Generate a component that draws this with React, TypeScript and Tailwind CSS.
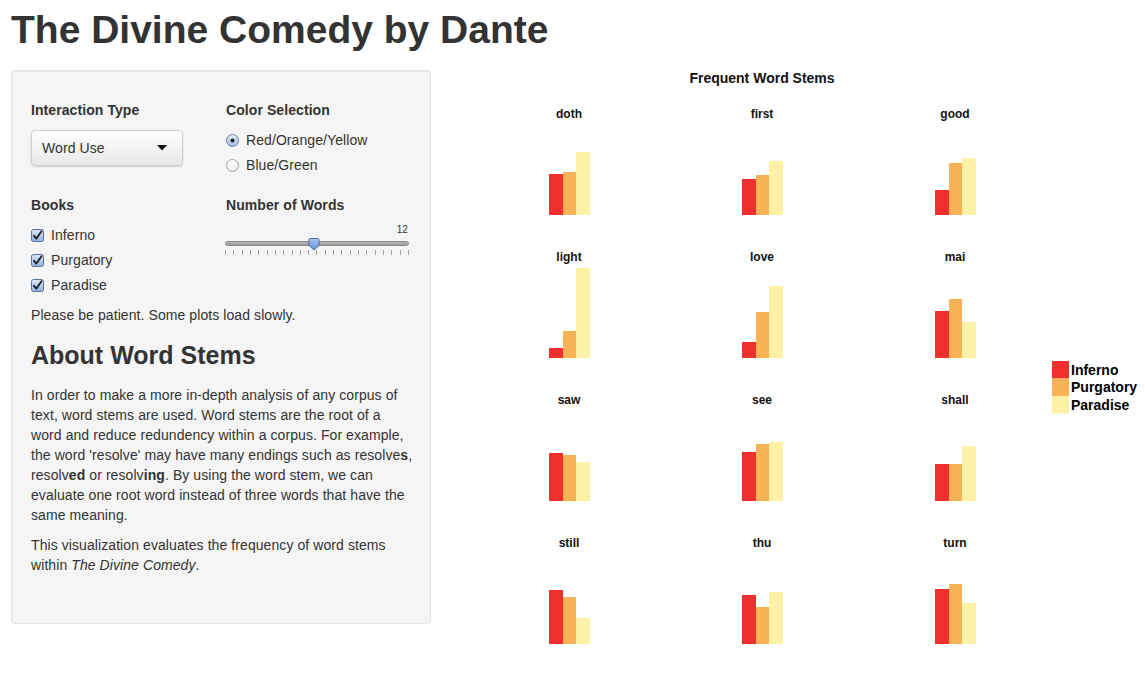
import React from "react";

const RED = "#ee312d";
const ORANGE = "#f9b357";
const YELLOW = "#fdf1a5";

type Bar = { word: string; v: [number, number, number] };

const data: Bar[] = [
  { word: "doth", v: [41, 43, 63] },
  { word: "first", v: [36, 40, 54] },
  { word: "good", v: [25, 52, 57] },
  { word: "light", v: [10, 27, 90] },
  { word: "love", v: [16, 46, 72] },
  { word: "mai", v: [47, 59, 36] },
  { word: "saw", v: [48, 46, 39] },
  { word: "see", v: [49, 57, 59] },
  { word: "shall", v: [37, 37, 55] },
  { word: "still", v: [54, 47, 26] },
  { word: "thu", v: [49, 37, 52] },
  { word: "turn", v: [55, 60, 41] },
];

function Chart() {
  const colCenters = [122, 315, 508];
  const colLeft = [102, 295, 488];
  const labelY = [47.5, 191, 334, 477];
  const bottoms = [145, 288, 431, 574];
  return (
    <svg width={698} height={600} className="block shrink-0" style={{ fontFamily: "'Liberation Sans', Arial, sans-serif" }}>
      <text x={315} y={12.5} textAnchor="middle" fontWeight="bold" fontSize="14" fill="#111">
        Frequent Word Stems
      </text>
      {data.map((d, i) => {
        const r = Math.floor(i / 3);
        const c = i % 3;
        const x = colLeft[c];
        const b = bottoms[r];
        return (
          <g key={d.word}>
            <text x={colCenters[c]} y={labelY[r]} textAnchor="middle" fontWeight="bold" fontSize="12" fill="#111">
              {d.word}
            </text>
            <rect x={x} y={b - d.v[0]} width={14} height={d.v[0]} fill={RED} />
            <rect x={x + 14} y={b - d.v[1]} width={13} height={d.v[1]} fill={ORANGE} />
            <rect x={x + 27} y={b - d.v[2]} width={14} height={d.v[2]} fill={YELLOW} />
          </g>
        );
      })}
      <rect x={605} y={291} width={17} height={17.5} fill={RED} />
      <rect x={605} y={308.5} width={17} height={17.5} fill={ORANGE} />
      <rect x={605} y={326} width={17} height={17.5} fill={YELLOW} />
      <text x={624} y={304.5} fontWeight="bold" fontSize="14" fill="#000">Inferno</text>
      <text x={624} y={322} fontWeight="bold" fontSize="14" fill="#000">Purgatory</text>
      <text x={624} y={340} fontWeight="bold" fontSize="14" fill="#000">Paradise</text>
    </svg>
  );
}

function CheckBox() {
  return (
    <svg width="13" height="13" viewBox="0 0 13 13" className="shrink-0">
      <defs>
        <linearGradient id="cbg" x1="0" y1="0" x2="0" y2="1">
          <stop offset="0" stopColor="#dde9f8" />
          <stop offset="1" stopColor="#8fb0df" />
        </linearGradient>
      </defs>
      <rect x="0.5" y="0.5" width="12" height="12" rx="2" fill="url(#cbg)" stroke="#5b6f97" />
      <path d="M3 6.8 L5.4 9.6 L10.5 2.2" fill="none" stroke="#1c1c1c" strokeWidth="1.8" strokeLinecap="round" strokeLinejoin="round" />
    </svg>
  );
}

function Radio({ checked }: { checked: boolean }) {
  return (
    <svg width="13" height="13" viewBox="0 0 13 13" className="shrink-0">
      <defs>
        <linearGradient id="rbg" x1="0" y1="0" x2="0" y2="1">
          <stop offset="0" stopColor="#e4eefa" />
          <stop offset="1" stopColor="#9dbbe4" />
        </linearGradient>
        <linearGradient id="rbw" x1="0" y1="0" x2="0" y2="1">
          <stop offset="0" stopColor="#ffffff" />
          <stop offset="1" stopColor="#ececec" />
        </linearGradient>
      </defs>
      <circle cx="6.5" cy="6.5" r="6" fill={checked ? "url(#rbg)" : "url(#rbw)"} stroke={checked ? "#6a7fa6" : "#a3a3a3"} />
      {checked && <circle cx="6.5" cy="6.5" r="2" fill="#1e1e1e" />}
    </svg>
  );
}

function Slider() {
  const ticks = Array.from({ length: 23 });
  return (
    <div className="relative w-[184px] h-[40px] ml-[-1px]">
      <div className="absolute right-[1px] top-[9px] text-[10px] leading-[12px] text-[#333]">12</div>
      <div className="absolute left-0 right-0 top-[26px] h-[5px] rounded-[3px] border border-[#8a8a8a] bg-gradient-to-b from-[#b5b5b5] to-[#9c9c9c]" />
      <svg width="12" height="13" viewBox="0 0 12 13" className="absolute left-[83px] top-[23px]">
        <defs>
          <linearGradient id="hb" x1="0" y1="0" x2="0" y2="1">
            <stop offset="0" stopColor="#a9c8f2" />
            <stop offset="1" stopColor="#5f8fd6" />
          </linearGradient>
        </defs>
        <path d="M1 2 Q1 0.5 2.5 0.5 L9.5 0.5 Q11 0.5 11 2 L11 7.5 L6 12 L1 7.5 Z" fill="url(#hb)" stroke="#4a69a8" strokeWidth="1" />
      </svg>
      <div className="absolute left-0 right-0 top-[35px] flex justify-between">
        {ticks.map((_, i) => (
          <div key={i} className="w-px h-[5px] bg-[#a0a0a0]" />
        ))}
      </div>
    </div>
  );
}

export default function App() {
  return (
    <div
      className="w-[1145px] h-[675px] bg-white text-[#333] pl-[11px] overflow-hidden"
      style={{ fontFamily: "'Liberation Sans', Arial, sans-serif" }}
    >
      <h1 className="pt-[10px] h-[50px] text-[39px] leading-[40px] font-bold text-[#333]">The Divine Comedy by Dante</h1>
      <div className="flex mt-[20px]">
        <div className="w-[420px] h-[554px] shrink-0 bg-[#f5f5f5] border border-[#e3e3e3] rounded-[4px] px-[19px] pt-[29px] text-[14px] leading-[20px] tracking-[0.08px] shadow-[inset_0_1px_1px_rgba(0,0,0,0.05)]">
          <div className="grid grid-cols-2 gap-x-[10px] gap-y-[20px]">
            <div>
              <div className="font-bold mb-[10px]">Interaction Type</div>
              <div className="w-[152px] h-[36px] flex items-center justify-between pl-[10px] pr-[15px] rounded-[4px] border border-[#d0d0d0] bg-gradient-to-b from-[#ffffff] to-[#e8e8e8] shadow-[0_1px_2px_rgba(0,0,0,0.15)]">
                <span>Word Use</span>
                <svg width="10" height="6" viewBox="0 0 10 6">
                  <path d="M0 0 L10 0 L5 5.5 Z" fill="#111" />
                </svg>
              </div>
            </div>
            <div>
              <div className="font-bold mb-[10px]">Color Selection</div>
              <div className="flex flex-col gap-[5px]">
                <div className="flex items-center gap-[7px]">
                  <Radio checked />
                  <span>Red/Orange/Yellow</span>
                </div>
                <div className="flex items-center gap-[7px]">
                  <Radio checked={false} />
                  <span>Blue/Green</span>
                </div>
              </div>
            </div>
            <div>
              <div className="font-bold mb-[10px]">Books</div>
              <div className="flex flex-col gap-[5px]">
                {["Inferno", "Purgatory", "Paradise"].map((b) => (
                  <div key={b} className="flex items-center gap-[7px]">
                    <CheckBox />
                    <span>{b}</span>
                  </div>
                ))}
              </div>
            </div>
            <div>
              <div className="font-bold">Number of Words</div>
              <Slider />
            </div>
          </div>
          <p className="mt-[10px] mb-[10px]">Please be patient. Some plots load slowly.</p>
          <h3 className="text-[25px] leading-[40px] font-bold my-[10px] tracking-normal">About Word Stems</h3>
          <p className="mb-[10px] whitespace-nowrap">
            In order to make a more in-depth analysis of any corpus of
            <br />
            text, word stems are used. Word stems are the root of a
            <br />
            word and reduce redundency within a corpus. For example,
            <br />
            the word 'resolve' may have many endings such as resolve<b>s</b>,
            <br />
            resolv<b>ed</b> or resolv<b>ing</b>. By using the word stem, we can
            <br />
            evaluate one root word instead of three words that have the
            <br />
            same meaning.
          </p>
          <p className="whitespace-nowrap">
            This visualization evaluates the frequency of word stems
            <br />
            within <i>The Divine Comedy</i>.
          </p>
        </div>
        <div className="ml-[16px]">
          <Chart />
        </div>
      </div>
    </div>
  );
}
